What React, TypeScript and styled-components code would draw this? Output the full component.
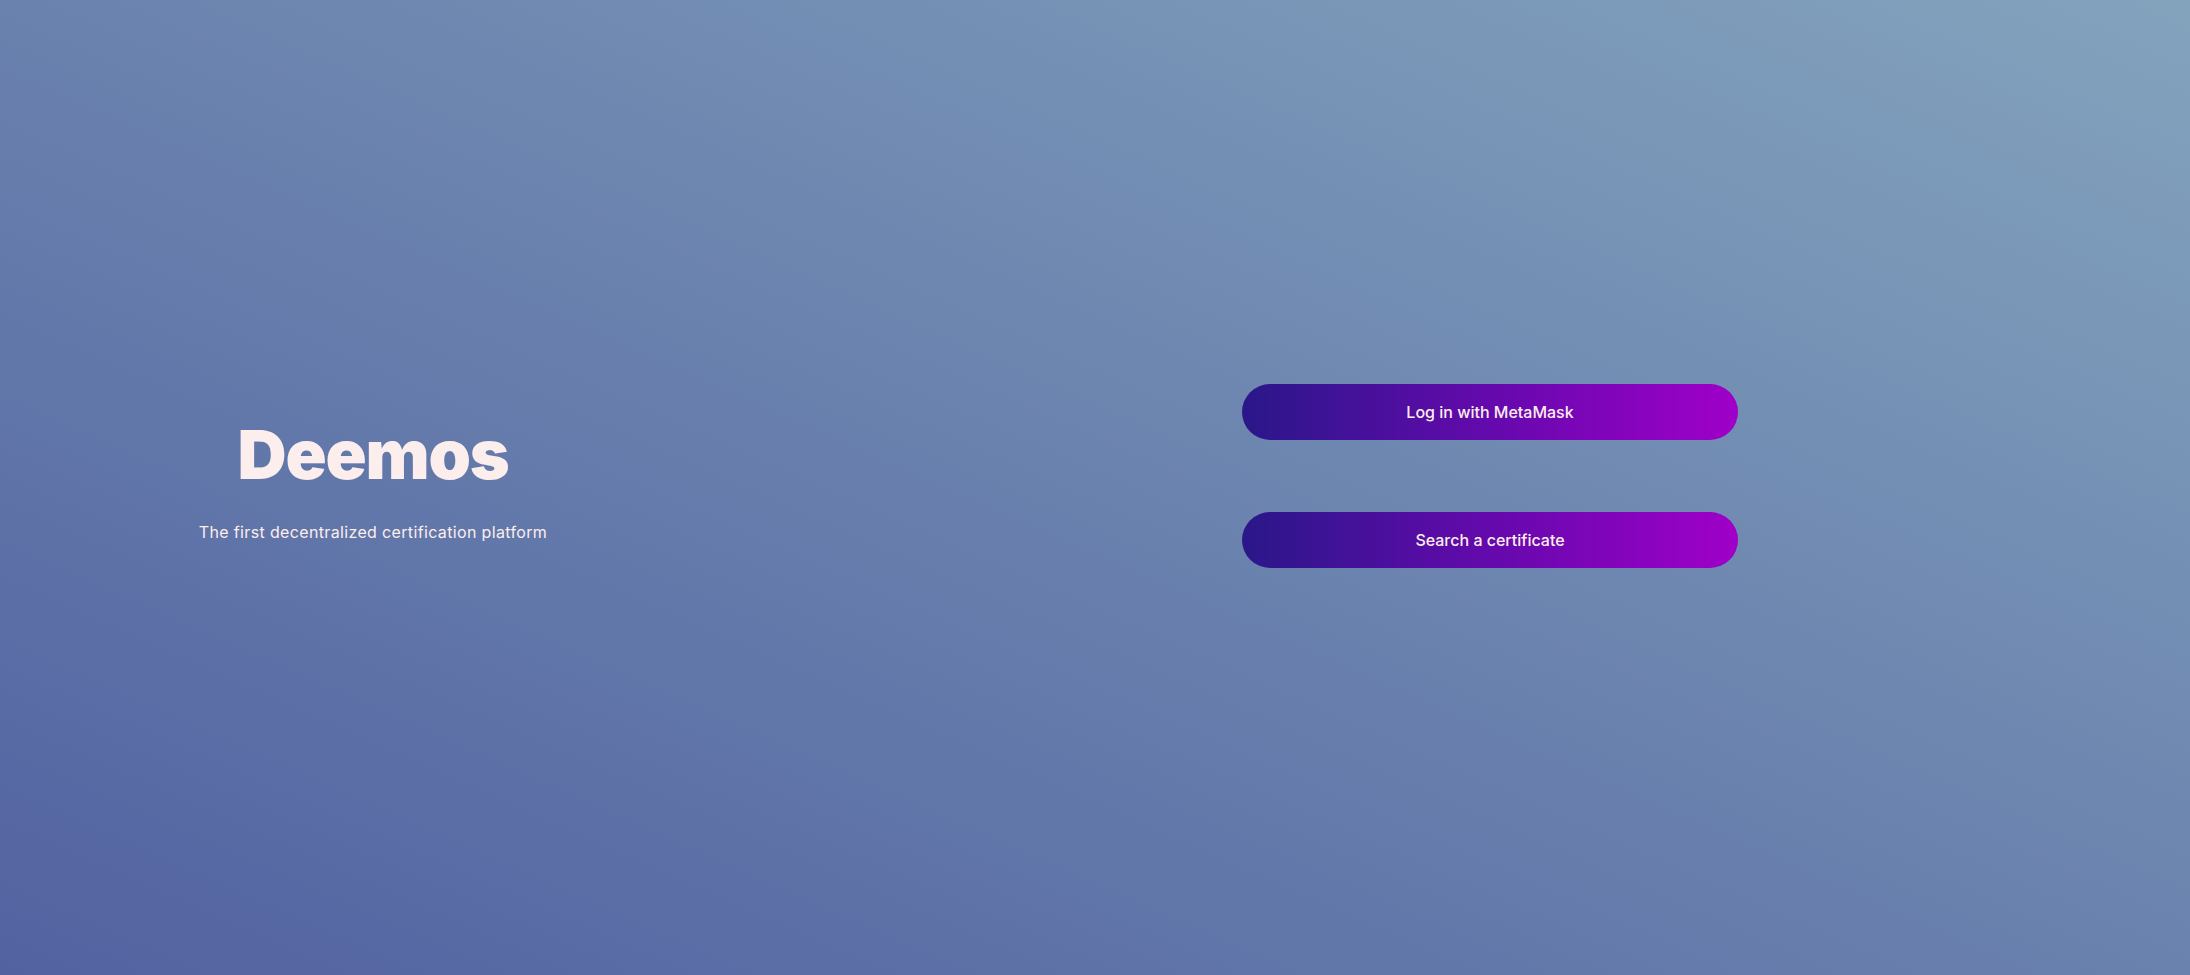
import React from "react";
import styled, { createGlobalStyle } from "styled-components";

const Global = createGlobalStyle`
  html, body { margin: 0; padding: 0; }
  body {
    font-family: "Inter", "Open Sans", sans-serif;
    background: #6a82b0;
  }
`;

const Page = styled.main`
  width: 2190px;
  height: 975px;
  box-sizing: border-box;
  background: linear-gradient(to top right, #5262a1 0%, #6a82ae 50%, #83a3bd 100%);
  display: grid;
  grid-template-columns: 746px 1fr;
  align-items: center;
  padding-bottom: 24px;
`;

const Brand = styled.section`
  display: flex;
  flex-direction: column;
  align-items: center;
  gap: 34px;
  padding-top: 10px;
`;

const Title = styled.h1`
  margin: 0;
  font-family: "Inter", sans-serif;
  font-weight: 900;
  font-size: 68px;
  line-height: 1;
  color: #fdeeee;
  letter-spacing: -1.2px;
`;

const Tagline = styled.p`
  margin: 0;
  font-family: "Inter", sans-serif;
  font-weight: 400;
  font-size: 16px;
  letter-spacing: 0.35px;
  color: #fdeeee;
`;

const Actions = styled.section`
  display: flex;
  flex-direction: column;
  align-items: flex-start;
  gap: 72px;
  padding-left: 496px;
`;

const ActionButton = styled.button`
  width: 496px;
  height: 56px;
  border: none;
  border-radius: 28px;
  background: linear-gradient(to right, #2a1789 0%, #6a08b0 55%, #a000c8 100%);
  color: #fdeeee;
  font-family: "Inter", sans-serif;
  font-weight: 500;
  font-size: 16px;
  cursor: pointer;
`;

export default function App() {
  return (
    <>
      <Global />
      <Page>
        <Brand>
          <Title>Deemos</Title>
          <Tagline>The first decentralized certification platform</Tagline>
        </Brand>
        <Actions>
          <ActionButton>Log in with MetaMask</ActionButton>
          <ActionButton>Search a certificate</ActionButton>
        </Actions>
      </Page>
    </>
  );
}
